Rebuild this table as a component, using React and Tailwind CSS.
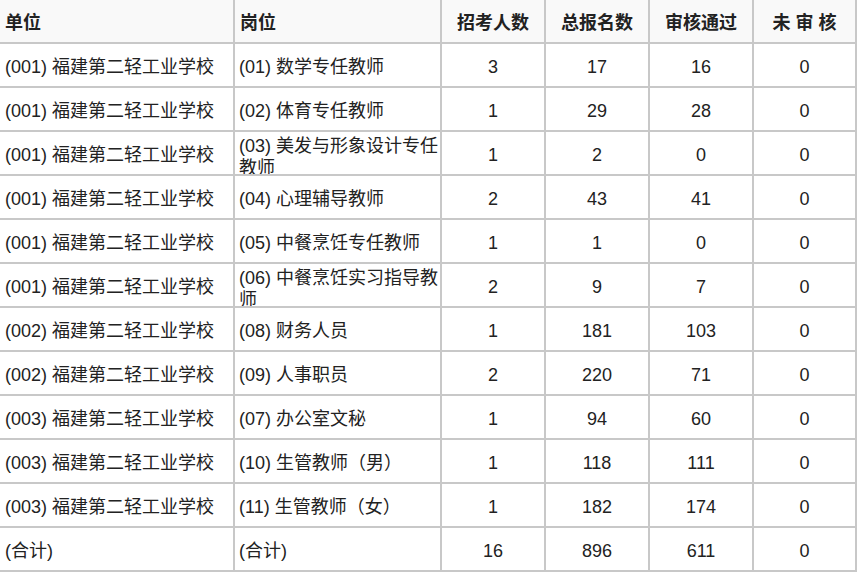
import React from "react";

const rows = [
  ["(001) 福建第二轻工业学校", ["(01) 数学专任教师"], "3", "17", "16", "0"],
  ["(001) 福建第二轻工业学校", ["(02) 体育专任教师"], "1", "29", "28", "0"],
  ["(001) 福建第二轻工业学校", ["(03) 美发与形象设计专任", "教师"], "1", "2", "0", "0"],
  ["(001) 福建第二轻工业学校", ["(04) 心理辅导教师"], "2", "43", "41", "0"],
  ["(001) 福建第二轻工业学校", ["(05) 中餐烹饪专任教师"], "1", "1", "0", "0"],
  ["(001) 福建第二轻工业学校", ["(06) 中餐烹饪实习指导教", "师"], "2", "9", "7", "0"],
  ["(002) 福建第二轻工业学校", ["(08) 财务人员"], "1", "181", "103", "0"],
  ["(002) 福建第二轻工业学校", ["(09) 人事职员"], "2", "220", "71", "0"],
  ["(003) 福建第二轻工业学校", ["(07) 办公室文秘"], "1", "94", "60", "0"],
  ["(003) 福建第二轻工业学校", ["(10) 生管教师（男）"], "1", "118", "111", "0"],
  ["(003) 福建第二轻工业学校", ["(11) 生管教师（女）"], "1", "182", "174", "0"],
  ["(合计)", ["(合计)"], "16", "896", "611", "0"],
];

const headers = ["单位", "岗位", "招考人数", "总报名数", "审核通过", "未 审 核"];

export default function App() {
  return (
    <div
      className="w-[857px] h-[573px] bg-white overflow-hidden text-[18px] text-[#222]"
      style={{ fontFamily: '"Liberation Sans", "Noto Sans CJK SC", sans-serif' }}
    >
      <div className="grid grid-cols-[233px_205px_102px_102px_102px_101px] auto-rows-[42px] gap-[2px] bg-[#c8c8c8] pr-[2px] pb-[2px] w-[857px]">
        {headers.map((h, i) => (
          <div
            key={h}
            className={`bg-[#f9f9f9] font-bold flex items-center pt-[4px] leading-[22px] overflow-hidden ${
              i < 2 ? "pl-[5px]" : "justify-center"
            }`}
          >
            <span className="whitespace-pre">{h}</span>
          </div>
        ))}
        {rows.map((r, ri) => (
          <React.Fragment key={ri}>
            <div className="bg-white flex items-center pl-[5px] pt-[4px] leading-[22px] whitespace-nowrap overflow-hidden">
              {r[0]}
            </div>
            {r[1].length > 1 ? (
              <div className="bg-white flex items-start pl-[4px] pt-[3px] leading-[22px] overflow-hidden">
                <div className="whitespace-nowrap">
                  {r[1].map((l, li) => (
                    <div key={li}>{l}</div>
                  ))}
                </div>
              </div>
            ) : (
              <div className="bg-white flex items-center pl-[4px] pt-[4px] leading-[22px] whitespace-nowrap overflow-hidden">
                {r[1][0]}
              </div>
            )}
            {r.slice(2).map((v, vi) => (
              <div
                key={vi}
                className="bg-white flex items-center justify-center pt-[4px] leading-[22px]"
              >
                {v}
              </div>
            ))}
          </React.Fragment>
        ))}
      </div>
    </div>
  );
}
